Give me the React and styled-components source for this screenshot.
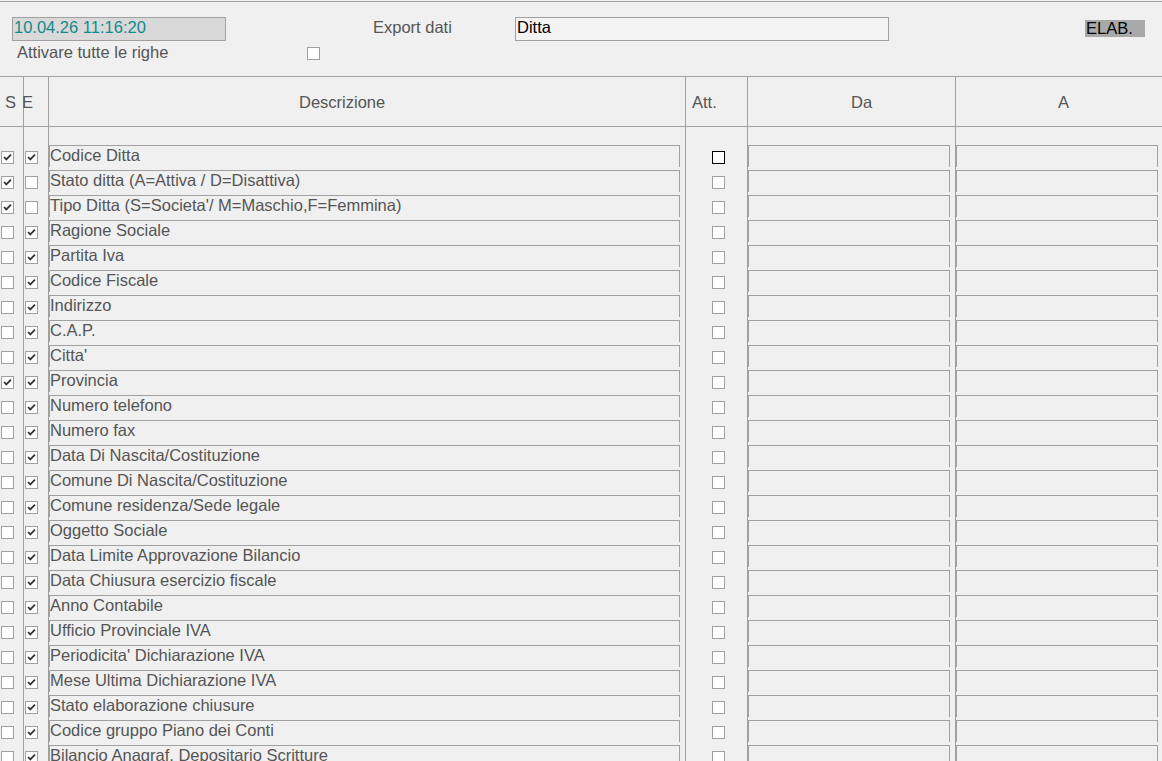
import React from "react";
import styled, { createGlobalStyle } from "styled-components";

const GlobalStyle = createGlobalStyle`
  html, body {
    margin: 0;
    padding: 0;
    height: 761px;
    overflow: hidden;
    background: #f0f0f0;
  }
  body {
    font-family: "Liberation Sans", Arial, sans-serif;
    font-size: 16.5px;
    color: #555;
  }
`;

const LINE = "#a0a0a0";

const rows = [
  ["Codice Ditta", true, true],
  ["Stato ditta (A=Attiva / D=Disattiva)", true, false],
  ["Tipo Ditta (S=Societa'/ M=Maschio,F=Femmina)", true, false],
  ["Ragione Sociale", false, true],
  ["Partita Iva", false, true],
  ["Codice Fiscale", false, true],
  ["Indirizzo", false, true],
  ["C.A.P.", false, true],
  ["Citta'", false, true],
  ["Provincia", true, true],
  ["Numero telefono", false, true],
  ["Numero fax", false, true],
  ["Data Di Nascita/Costituzione", false, true],
  ["Comune Di Nascita/Costituzione", false, true],
  ["Comune residenza/Sede legale", false, true],
  ["Oggetto Sociale", false, true],
  ["Data Limite Approvazione Bilancio", false, true],
  ["Data Chiusura esercizio fiscale", false, true],
  ["Anno Contabile", false, true],
  ["Ufficio Provinciale IVA", false, true],
  ["Periodicita' Dichiarazione IVA", false, true],
  ["Mese Ultima Dichiarazione IVA", false, true],
  ["Stato elaborazione chiusure", false, true],
  ["Codice gruppo Piano dei Conti", false, true],
  ["Bilancio Anagraf. Depositario Scritture", false, true],
];

const Page = styled.div`
  height: 761px;
  overflow: hidden;
  padding-top: 1px;
  box-sizing: border-box;
`;

/* ---------- top form ---------- */

const TopForm = styled.div`
  border-top: 1px solid ${LINE};
  height: 75px;
  padding-top: 15px;
  box-sizing: border-box;
  display: flex;
  flex-direction: column;
`;

const FormRow = styled.div`
  display: flex;
  align-items: flex-start;
  height: ${(p) => p.$h}px;
`;

const DateField = styled.div`
  margin-left: 12px;
  width: 214px;
  height: 24px;
  box-sizing: border-box;
  border: 1px solid ${LINE};
  background: #d9d9d9;
  color: #12898a;
  line-height: 19px;
  padding-left: 1px;
`;

const FormLabel = styled.div`
  margin-left: ${(p) => p.$left}px;
  width: ${(p) => p.$w}px;
  line-height: ${(p) => p.$lh}px;
  color: #555;
  white-space: nowrap;
`;

const TextField = styled.div`
  width: 374px;
  height: 24px;
  box-sizing: border-box;
  border: 1px solid ${LINE};
  background: #f3f3f3;
  color: #000;
  line-height: 19px;
  padding-left: 1px;
`;

const ElabTag = styled.div`
  margin-left: 196px;
  margin-top: 3px;
  width: 60px;
  height: 17px;
  background: #a9a9a9;
  color: #000;
  line-height: 17px;
  padding-left: 1px;
  box-sizing: border-box;
`;

/* ---------- grid ---------- */

const COLS = "23px 25px 637px 62px 208px 207px";

const HeaderRow = styled.div`
  display: grid;
  grid-template-columns: ${COLS};
  height: 51px;
  border-top: 1px solid ${LINE};
  border-bottom: 1px solid ${LINE};
  box-sizing: border-box;
`;

const HeaderCell = styled.div`
  border-left: ${(p) => (p.$first ? "none" : `1px solid ${LINE}`)};
  padding-left: ${(p) => p.$indent}px;
  line-height: 50px;
  color: #555;
  white-space: nowrap;
  overflow: visible;
`;

const HeaderE = styled.span`
  margin-left: -2px;
`;

const Row = styled.div`
  display: grid;
  grid-template-columns: ${COLS};
  height: ${(p) => p.$h}px;
`;

const Cell = styled.div`
  border-left: ${(p) => (p.$first ? "none" : `1px solid ${LINE}`)};
  display: flex;
  align-items: flex-start;
  padding-left: ${(p) => p.$pad || 0}px;
  min-width: 0;
`;

const Field = styled.div`
  flex: 0 0 ${(p) => p.$w}px;
  height: 22px;
  box-sizing: border-box;
  border-top: 1px solid ${LINE};
  border-left: 1px solid ${LINE};
  border-right: 1px solid ${LINE};
  line-height: 18px;
  padding-left: 0;
  color: #555;
  white-space: nowrap;
  overflow: hidden;
`;

const Box = styled.div`
  width: 13px;
  height: 13px;
  box-sizing: border-box;
  margin-top: ${(p) => p.$top}px;
  border: 1px solid ${(p) => (p.$focus ? "#000" : LINE)};
  background: #fff;
  display: flex;
  align-items: center;
  justify-content: center;
`;

const Check = ({ on, top = 6, focus }) => (
  <Box $top={top} $focus={focus}>
    {on && (
      <svg width="11" height="11" viewBox="0 0 11 11">
        <path
          d="M2 5 L4.3 7.4 L9 2.6"
          fill="none"
          stroke="#333"
          strokeWidth="1.8"
        />
      </svg>
    )}
  </Box>
);

export default function App() {
  return (
    <>
      <GlobalStyle />
      <Page>
        <TopForm>
          <FormRow $h={24}>
            <DateField>10.04.26 11:16:20</DateField>
            <FormLabel $left={147} $w={142} $lh={21}>
              Export dati
            </FormLabel>
            <TextField>Ditta</TextField>
            <ElabTag>ELAB.</ElabTag>
          </FormRow>
          <FormRow $h={22}>
            <FormLabel $left={17} $w={290} $lh={23}>
              Attivare tutte le righe
            </FormLabel>
            <Check top={6} />
          </FormRow>
        </TopForm>

        <HeaderRow>
          <HeaderCell $first $indent={5}>S</HeaderCell>
          <HeaderCell $indent={0}>
            <HeaderE>E</HeaderE>
          </HeaderCell>
          <HeaderCell $indent={250}>Descrizione</HeaderCell>
          <HeaderCell $indent={6}>Att.</HeaderCell>
          <HeaderCell $indent={103}>Da</HeaderCell>
          <HeaderCell $indent={102}>A</HeaderCell>
        </HeaderRow>

        <Row $h={18}>
          <Cell $first />
          <Cell />
          <Cell />
          <Cell />
          <Cell />
          <Cell />
        </Row>

        {rows.map(([label, s, e], i) => (
          <Row key={label} $h={25}>
            <Cell $first $pad={1}>
              <Check on={s} />
            </Cell>
            <Cell $pad={1}>
              <Check on={e} />
            </Cell>
            <Cell>
              <Field $w={631}>{label}</Field>
            </Cell>
            <Cell $pad={26}>
              <Check focus={i === 0} />
            </Cell>
            <Cell>
              <Field $w={202} />
            </Cell>
            <Cell>
              <Field $w={202} />
            </Cell>
          </Row>
        ))}
      </Page>
    </>
  );
}
